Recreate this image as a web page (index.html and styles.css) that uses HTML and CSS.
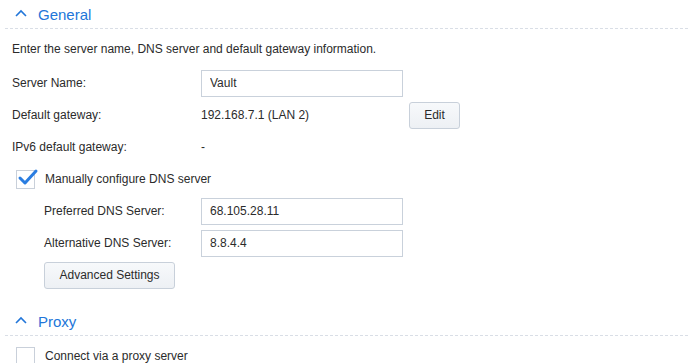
FILE: index.html
```html
<!DOCTYPE html>
<html>
<head>
  <title>Network - General</title>
  <link rel="stylesheet" href="styles.css">
</head>
<body>
  <div class="section">
    <div class="section-head">
      <svg class="chevron" width="12" height="8" viewBox="0 0 12 8"><polyline points="1,7 6,2 11,7" /></svg>
      <span>General</span>
    </div>
    <div class="section-body">
      <p class="desc">Enter the server name, DNS server and default gateway information.</p>
      <div class="row">
        <span class="label">Server Name:</span>
        <input class="field" type="text" value="Vault">
      </div>
      <div class="row">
        <span class="label">Default gateway:</span>
        <span class="value">192.168.7.1 (LAN 2)</span>
        <button class="btn edit">Edit</button>
      </div>
      <div class="row">
        <span class="label">IPv6 default gateway:</span>
        <span class="value">-</span>
      </div>
      <div class="row check-row">
        <span class="checkbox">
          <svg class="tick" width="22" height="18" viewBox="0 0 22 18"><polyline points="3,10 8,15 19,3" /></svg>
        </span>
        <span>Manually configure DNS server</span>
      </div>
      <div class="sub">
        <div class="row">
          <span class="label">Preferred DNS Server:</span>
          <input class="field" type="text" value="68.105.28.11">
        </div>
        <div class="row">
          <span class="label">Alternative DNS Server:</span>
          <input class="field" type="text" value="8.8.4.4">
        </div>
        <div class="row">
          <button class="btn advanced">Advanced Settings</button>
        </div>
      </div>
    </div>
  </div>
  <div class="section">
    <div class="section-head">
      <svg class="chevron" width="12" height="8" viewBox="0 0 12 8"><polyline points="1,7 6,2 11,7" /></svg>
      <span>Proxy</span>
    </div>
    <div class="section-body proxy">
      <div class="row check-row">
        <span class="checkbox"></span>
        <span>Connect via a proxy server</span>
      </div>
    </div>
  </div>
</body>
</html>
```

FILE: styles.css
```css
body {
  margin: 0;
  background-color: #fff;
  font-family: "Liberation Sans", Arial, sans-serif;
  font-size: 12px;
  color: #2b2b2b;
}

.section-head {
  display: flex;
  align-items: center;
  height: 28px;
  margin: 0 2px 0 5px;
  padding-left: 10px;
  border-bottom: 1px dashed #d9dee6;
  color: #2276d9;
  font-size: 15px;
}

.chevron {
  margin-right: 11px;
  margin-top: -2px;
}

.chevron polyline {
  fill: none;
  stroke: #2276d9;
  stroke-width: 1.6;
}

.section-body {
  padding: 11px 0 16px 12px;
}

.section-body.proxy {
  padding-top: 4px;
  padding-bottom: 0;
}

.desc {
  margin: 0 0 9px;
  line-height: 18px;
}

.row {
  display: flex;
  align-items: center;
  height: 32px;
}

.label {
  flex: none;
  width: 189px;
}

.sub {
  padding-left: 32px;
}

.sub .label {
  width: 157px;
}

.value {
  width: 202px;
}

.field {
  box-sizing: border-box;
  width: 202px;
  height: 27px;
  padding: 0 8px;
  border: 1px solid #c9d1db;
  border-radius: 0;
  font-family: inherit;
  font-size: 12px;
  color: #2b2b2b;
  outline: none;
}

.btn {
  height: 27px;
  padding: 0 11px;
  border: 1px solid #c8d0da;
  border-radius: 3px;
  background: linear-gradient(#f7f9fb, #edf0f4);
  font-family: inherit;
  font-size: 12px;
  color: #2b2b2b;
}

.edit {
  margin-left: 6px;
  width: 51px;
  padding: 0;
}

.advanced {
  width: 131px;
}

.check-row .checkbox {
  position: relative;
  flex: none;
  box-sizing: border-box;
  width: 19px;
  height: 19px;
  margin: 0 10px 0 4px;
  border: 1px solid #c9d0da;
  background: #fff;
}

.tick {
  position: absolute;
  left: 0;
  top: -3px;
}

.tick polyline {
  fill: none;
  stroke: #2a7de1;
  stroke-width: 3;
  stroke-linecap: round;
  stroke-linejoin: round;
}
```
